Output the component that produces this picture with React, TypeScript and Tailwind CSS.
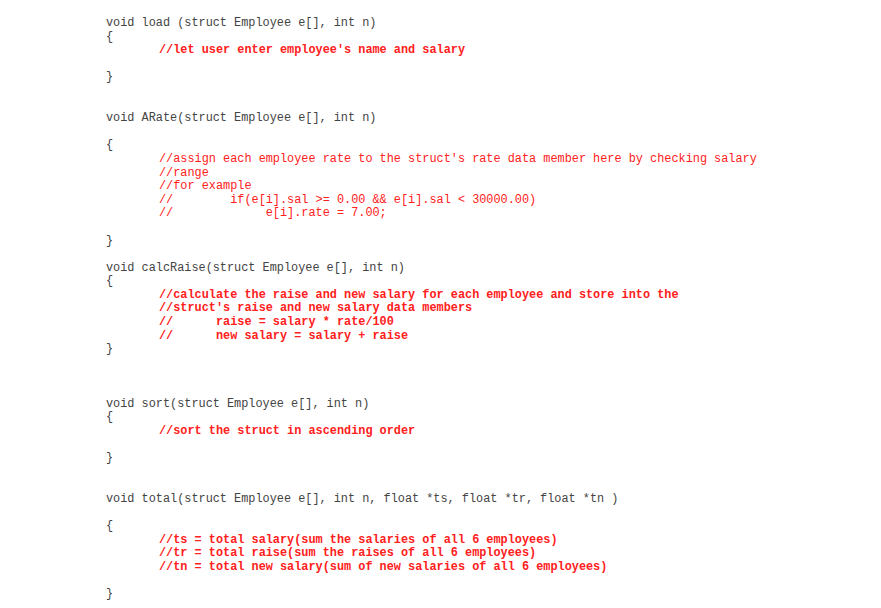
import React from 'react';

type Line = { text: string; kind?: 'code' | 'comment' | 'note' | 'blank' };

const code = (text: string): Line => ({ text, kind: 'code' });
const cmt = (text: string): Line => ({ text, kind: 'comment' });
const note = (text: string): Line => ({ text, kind: 'note' });
const blank: Line = { text: '', kind: 'blank' };

const lines: Line[] = [
  code('void load (struct Employee e[], int n)'),
  code('{'),
  cmt("//let user enter employee's name and salary"),
  blank,
  code('}'),
  blank,
  blank,
  code('void ARate(struct Employee e[], int n)'),
  blank,
  code('{'),
  note("//assign each employee rate to the struct's rate data member here by checking salary"),
  note('//range'),
  note('//for example'),
  note('//        if(e[i].sal >= 0.00 && e[i].sal < 30000.00)'),
  note('//             e[i].rate = 7.00;'),
  blank,
  code('}'),
  blank,
  code('void calcRaise(struct Employee e[], int n)'),
  code('{'),
  cmt('//calculate the raise and new salary for each employee and store into the'),
  cmt("//struct's raise and new salary data members"),
  cmt('//      raise = salary * rate/100'),
  cmt('//      new salary = salary + raise'),
  code('}'),
  blank,
  blank,
  blank,
  code('void sort(struct Employee e[], int n)'),
  code('{'),
  cmt('//sort the struct in ascending order'),
  blank,
  code('}'),
  blank,
  blank,
  code('void total(struct Employee e[], int n, float *ts, float *tr, float *tn )'),
  blank,
  code('{'),
  cmt('//ts = total salary(sum the salaries of all 6 employees)'),
  cmt('//tr = total raise(sum the raises of all 6 employees)'),
  cmt('//tn = total new salary(sum of new salaries of all 6 employees)'),
  blank,
  code('}'),
];

export default function App() {
  return (
    <div className="w-[881px] h-[608px] bg-white overflow-hidden pt-[17px] pl-[106px] font-['Liberation_Mono',monospace] text-[11.87px] leading-[13.6px] whitespace-pre">
      {lines.map((l, i) => {
        if (l.kind === 'blank') return <div key={i} className="h-[13.6px]" />;
        if (l.kind === 'code')
          return (
            <div key={i} className="text-[#444444]">
              {l.text}
            </div>
          );
        return (
          <div
            key={i}
            className={`pl-[53px] text-[#ff2020] ${l.kind === 'comment' ? 'font-bold' : 'font-normal'}`}
          >
            {l.text}
          </div>
        );
      })}
    </div>
  );
}
